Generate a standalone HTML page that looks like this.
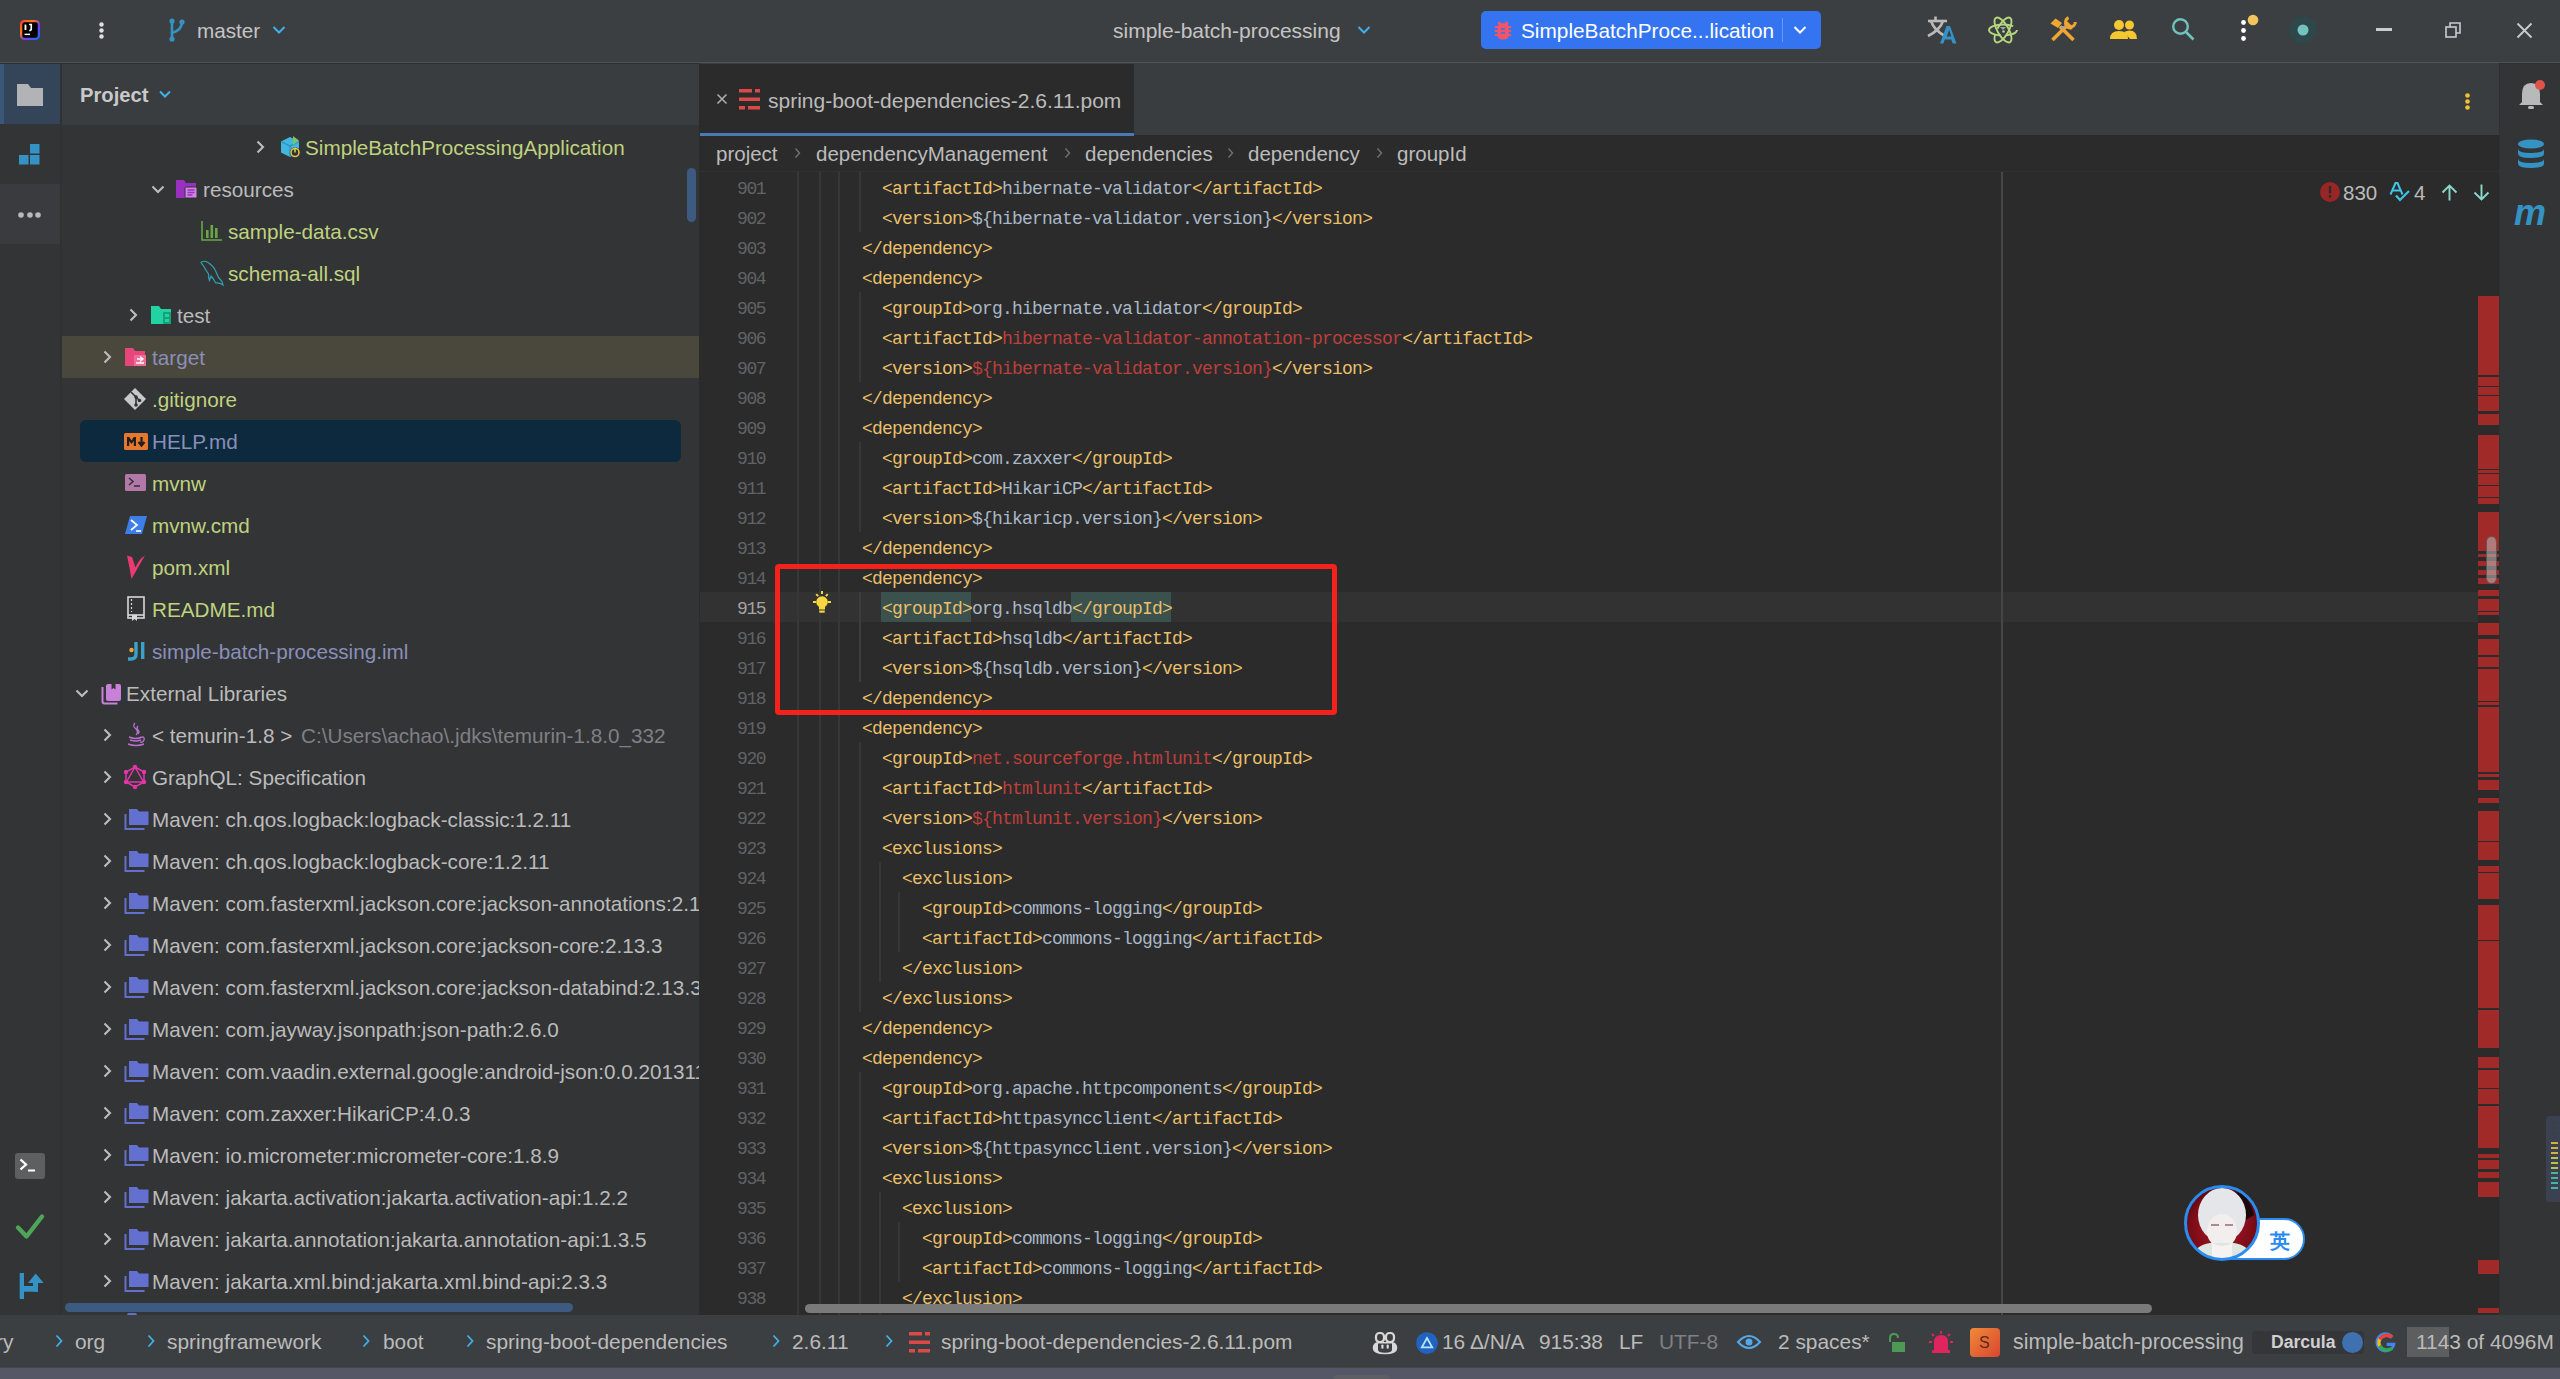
<!DOCTYPE html><html><head><meta charset="utf-8"><style>
*{margin:0;padding:0;box-sizing:border-box}
html,body{width:2560px;height:1379px;overflow:hidden;background:#2b2b2b}
body{position:relative;font-family:"Liberation Sans",sans-serif;color:#bbbbbb}
.a{position:absolute}
.t{position:absolute;white-space:pre;font-size:20.7px;line-height:42px;height:42px}
.c{position:absolute;left:802px;white-space:pre;font-family:"Liberation Mono",monospace;font-size:18px;letter-spacing:-0.8px;line-height:30px;height:30px;color:#a9b7c6}
.g{color:#e8bf6a}
.r{color:#bc3f3c}
.ln{position:absolute;left:664px;width:101px;text-align:right;font-family:"Liberation Mono",monospace;font-size:18px;letter-spacing:-1.5px;line-height:30px;color:#606366}
svg{position:absolute;overflow:visible}
</style></head><body>
<div class="a" style="left:0px;top:0px;width:2560px;height:62px;background:#3c3f41;"></div>
<div class="a" style="left:0px;top:62px;width:2560px;height:1px;background:#515151;"></div>
<div class="a" style="left:0px;top:63px;width:2560px;height:1px;background:#3a3d40;"></div>
<div class="a" style="left:0px;top:63px;width:700px;height:1px;background:#2e2f30;"></div>
<div class="a" style="left:0px;top:64px;width:60px;height:1251px;background:#333436;"></div>
<div class="a" style="left:60px;top:64px;width:2px;height:1251px;background:#303133;"></div>
<div class="a" style="left:0px;top:64px;width:60px;height:60px;background:#34455a;"></div>
<div class="a" style="left:0px;top:64px;width:4px;height:60px;background:#3a5679;"></div>
<div class="a" style="left:0px;top:184px;width:60px;height:60px;background:#393b3f;"></div>
<div class="a" style="left:62px;top:64px;width:637px;height:61px;background:#3a3d40;"></div>
<div class="a" style="left:62px;top:125px;width:637px;height:1190px;background:#333436;"></div>
<div class="a" style="left:699px;top:64px;width:1px;height:1251px;background:#2b2b2b;"></div>
<div class="a" style="left:700px;top:64px;width:1799px;height:71px;background:#3a3d40;"></div>
<div class="a" style="left:700px;top:64px;width:434px;height:71px;background:#2b2b2b;"></div>
<div class="a" style="left:700px;top:133px;width:434px;height:3px;background:#4a7ab5;"></div>
<div class="a" style="left:700px;top:136px;width:1799px;height:35px;background:#2b2b2b;"></div>
<div class="a" style="left:700px;top:171px;width:1799px;height:1px;background:#323232;"></div>
<div class="a" style="left:700px;top:172px;width:1799px;height:1143px;background:#2b2b2b;"></div>
<div class="a" style="left:2499px;top:63px;width:61px;height:1252px;background:#333436;"></div>
<div class="a" style="left:2499px;top:63px;width:61px;height:1px;background:#2f3031;"></div>
<div class="a" style="left:2499px;top:63px;width:1px;height:1252px;background:#2f3031;"></div>
<div class="a" style="left:0px;top:1315px;width:2560px;height:52px;background:#3c3f41;"></div>
<div class="a" style="left:0px;top:1367px;width:2560px;height:12px;background:#555766;"></div>
<div class="a" style="left:0px;top:1367px;width:2560px;height:1px;background:#45474d;"></div>
<div class="a" style="left:1333px;top:1375px;width:57px;height:6px;background:#5d5f65;border-radius:5px 5px 0 0"></div>
<svg style="left:20px;top:20px" width="20" height="20" viewBox="0 0 20 20"><defs><linearGradient id="ij" x1="0" y1="0" x2="1" y2="1"><stop offset="0" stop-color="#ff3d3d"/><stop offset=".35" stop-color="#ff7a1a"/><stop offset=".6" stop-color="#7a3bf0"/><stop offset="1" stop-color="#087cfa"/></linearGradient></defs><g transform="scale(.909)"><rect x="0" y="0" width="22" height="22" rx="5" fill="url(#ij)"/><rect x="2.5" y="2.5" width="17" height="17" rx="2" fill="#000"/><rect x="5" y="5" width="2" height="6" fill="#fff"/><path d="M10 5h2.4v4.5q0 2-2.2 2" stroke="#fff" stroke-width="1.8" fill="none"/><rect x="5" y="15" width="6" height="1.6" fill="#fff"/></g></svg>
<svg style="left:99px;top:22px" width="5" height="5" viewBox="0 0 5 5"><circle cx="2.5" cy="2.5" r="2.2" fill="#e0e0e0"/></svg>
<svg style="left:99px;top:28px" width="5" height="5" viewBox="0 0 5 5"><circle cx="2.5" cy="2.5" r="2.2" fill="#e0e0e0"/></svg>
<svg style="left:99px;top:34px" width="5" height="5" viewBox="0 0 5 5"><circle cx="2.5" cy="2.5" r="2.2" fill="#e0e0e0"/></svg>
<svg style="left:168px;top:18px" width="18" height="24" viewBox="0 0 18 24"><g stroke="#3592c4" stroke-width="2.6" fill="none" stroke-linecap="round"><path d="M4 3v18"/><path d="M14 4q0 8-10 11"/></g><circle cx="4" cy="3" r="2.6" fill="#3592c4"/><circle cx="14" cy="4" r="2.6" fill="#3592c4"/><circle cx="4" cy="21" r="2.6" fill="#3592c4"/></svg>
<div class="t" style="left:197px;top:10px;color:#c4c4c4;font-size:20.7px;line-height:42px;height:42px;">master</div>
<svg style="left:272px;top:25px" width="14" height="10" viewBox="0 0 14 10"><path d="M1.5 2l5.5 5.5 5.5-5.5" stroke="#3fb0e8" stroke-width="2" fill="none"/></svg>
<div class="t" style="left:1113px;top:10px;color:#c4c4c4;font-size:21px;line-height:42px;height:42px;">simple-batch-processing</div>
<svg style="left:1357px;top:25px" width="14" height="10" viewBox="0 0 14 10"><path d="M1.5 2l5.5 5.5 5.5-5.5" stroke="#3fb0e8" stroke-width="2" fill="none"/></svg>
<div class="a" style="left:1481px;top:11px;width:340px;height:38px;background:#3574f0;border-radius:5px"></div>
<svg style="left:1494px;top:20px" width="18" height="20" viewBox="0 0 18 20"><g fill="#f55468"><path d="M3.5 3.3l1.8-2.3 1.8 2.2h3.8l1.8-2.2 1.8 2.3-1 1.5q1.5 1 1.5 3v6.5q0 5.3-5.8 5.3t-5.8-5.3V7.8q0-2 1.5-3z"/><rect x="0.8" y="6" width="16.4" height="2"/><rect x="0.8" y="10" width="16.4" height="2"/><rect x="0.8" y="14" width="16.4" height="2"/></g><g fill="#3574f0"><rect x="7" y="8.2" width="4" height="1.6"/><rect x="7" y="12.2" width="4" height="1.6"/><rect x="2.5" y="8" width="0.8" height="2"/><rect x="14.7" y="8" width="0.8" height="2"/><rect x="2.5" y="12" width="0.8" height="2"/><rect x="14.7" y="12" width="0.8" height="2"/></g></svg>
<div class="t" style="left:1521px;top:10px;color:#ffffff;font-size:20.8px;line-height:42px;height:42px;">SimpleBatchProce...lication</div>
<div class="a" style="left:1782px;top:18px;width:1px;height:24px;background:#6a98f5;"></div>
<svg style="left:1793px;top:25px" width="14" height="10" viewBox="0 0 14 10"><path d="M1.5 2l5.5 5.5 5.5-5.5" stroke="#ffffff" stroke-width="2" fill="none"/></svg>
<svg style="left:1927px;top:16px" width="32" height="28" viewBox="0 0 32 28"><g stroke="#b9b9b9" stroke-width="2.6" fill="none"><path d="M1 5h19"/><path d="M8.5 0.5v4"/><path d="M4 5q3 9 14 15"/><path d="M16 5q-3 9-15 15"/></g><path d="M13 27.5L19.5 10h3.5l6.5 17.5h-3.8l-1.4-4h-6.5l-1.4 4zM19.8 20.5h4.6l-2.3-6.8z" fill="#3592c4"/></svg>
<svg style="left:1988px;top:16px" width="30" height="28" viewBox="0 0 30 28"><g stroke="#b4d67c" stroke-width="1.9" fill="none"><ellipse cx="15" cy="14" rx="14" ry="5.5" stroke-dasharray="13 5 40 50"/><ellipse cx="15" cy="14" rx="14" ry="5.5" transform="rotate(60 15 14)"/><ellipse cx="15" cy="14" rx="14" ry="5.5" transform="rotate(-60 15 14)" stroke-dasharray="40 6 50"/></g><path d="M12 11h6l-3 3z" fill="#9aa6b0"/><circle cx="15.5" cy="15.5" r="1.3" fill="#b4d67c"/></svg>
<svg style="left:2050px;top:17px" width="26" height="25" viewBox="0 0 26 25"><g stroke="#f0a732" stroke-width="3.6" fill="none"><path d="M2.5 23L16 9.5"/><path d="M23.5 23L10 9.5"/></g><path d="M0.5 6.5L5.5 1.5 12 6 8 11z" fill="#f0a732"/><path d="M15 3.5a6 6 0 0 0 7.5 8.5l-1-3.5-3-3z" fill="#f0a732"/><circle cx="20.5" cy="5" r="4.8" stroke="#f0a732" stroke-width="3" fill="none" stroke-dasharray="20 10"/><path d="M10 9h6l-3 3.5z" fill="#9aa6b0"/></svg>
<svg style="left:2110px;top:19px" width="27" height="21" viewBox="0 0 27 21"><g fill="#f5c830"><circle cx="9" cy="6" r="5"/><path d="M0 20q0-8 9-8t9 8z"/><circle cx="19.5" cy="6" r="4.5"/><path d="M14 13q3-1.5 5.5-1.5q7.5 0 7.5 8.5h-7z"/></g></svg>
<svg style="left:2171px;top:17px" width="25" height="25" viewBox="0 0 25 25"><circle cx="9.5" cy="9.5" r="7.3" stroke="#6ec4bc" stroke-width="2.4" fill="none"/><path d="M15 15l7.5 7.5" stroke="#6ec4bc" stroke-width="2.6"/></svg>
<svg style="left:2241px;top:19.5px" width="5" height="5" viewBox="0 0 5 5"><circle cx="2.5" cy="2.5" r="2.4" fill="#ffffff"/></svg>
<svg style="left:2241px;top:27.5px" width="5" height="5" viewBox="0 0 5 5"><circle cx="2.5" cy="2.5" r="2.4" fill="#ffffff"/></svg>
<svg style="left:2241px;top:35.5px" width="5" height="5" viewBox="0 0 5 5"><circle cx="2.5" cy="2.5" r="2.4" fill="#ffffff"/></svg>
<svg style="left:2247px;top:14px" width="12" height="12" viewBox="0 0 12 12"><circle cx="6" cy="6" r="5.3" fill="#f2c55c"/></svg>
<svg style="left:2289px;top:16px" width="28" height="28" viewBox="0 0 28 28"><circle cx="14" cy="14" r="14" fill="#2f474a"/><circle cx="14" cy="14" r="5.5" fill="#6fc6c0"/><path d="M11 11h6l-3 3z" fill="#9aa6b0" opacity=".7"/></svg>
<div class="a" style="left:2376px;top:28px;width:16px;height:3px;background:#c8ccd0;"></div>
<svg style="left:2444px;top:21px" width="20" height="18" viewBox="0 0 20 18"><rect x="2" y="6" width="10" height="10" stroke="#c8ccd0" stroke-width="1.6" fill="none"/><path d="M6 6V2h10v10h-4" stroke="#c8ccd0" stroke-width="1.6" fill="none"/></svg>
<svg style="left:2516px;top:22px" width="17" height="17" viewBox="0 0 17 17"><path d="M1.5 1.5l14 14M15.5 1.5l-14 14" stroke="#c8ccd0" stroke-width="1.8"/></svg>
<svg style="left:17px;top:84px" width="26" height="22" viewBox="0 0 26 22"><path d="M0 0h11l3 4h12v18H0z" fill="#b1b3b6"/></svg>
<svg style="left:19px;top:144px" width="22" height="22" viewBox="0 0 22 22"><g fill="#3592c4"><rect x="11" y="0" width="9.5" height="9.5"/><rect x="0" y="11" width="9.5" height="9.5"/><rect x="11" y="11" width="9.5" height="9.5"/></g></svg>
<svg style="left:18px;top:212px" width="6" height="6" viewBox="0 0 6 6"><circle cx="3" cy="3" r="2.8" fill="#b8b9bb"/></svg>
<svg style="left:27px;top:212px" width="6" height="6" viewBox="0 0 6 6"><circle cx="3" cy="3" r="2.8" fill="#b8b9bb"/></svg>
<svg style="left:35px;top:212px" width="6" height="6" viewBox="0 0 6 6"><circle cx="3" cy="3" r="2.8" fill="#b8b9bb"/></svg>
<div class="a" style="left:15px;top:1153px;width:30px;height:26px;background:#5e5f61;border-radius:3px"></div>
<svg style="left:18px;top:1158px" width="24" height="16" viewBox="0 0 24 16"><path d="M2.5 1.5l5.5 5-5.5 5" stroke="#ffffff" stroke-width="2.3" fill="none"/><path d="M10 12.5h7" stroke="#ffffff" stroke-width="2"/></svg>
<svg style="left:16px;top:1214px" width="28" height="26" viewBox="0 0 28 26"><path d="M2 13.5L10.5 22.5L26 2.5" stroke="#4ea55a" stroke-width="4.4" stroke-linecap="round" stroke-linejoin="round" fill="none"/></svg>
<svg style="left:18px;top:1272px" width="28" height="28" viewBox="0 0 28 28"><g fill="#3592c4"><rect x="1.7" y="1" width="4.3" height="26"/><rect x="6" y="14" width="14" height="5.7"/><rect x="15" y="10" width="5" height="9.7"/><path d="M10 11L17.7 1.6L25.7 11z"/></g></svg>
<div class="t" style="left:80px;top:74px;color:#c9c9c9;font-size:20.2px;line-height:42px;height:42px;font-weight:bold">Project</div>
<svg style="left:159px;top:90px" width="12" height="8" viewBox="0 0 12 8"><path d="M1 1.5l5 5 5-5" stroke="#3fb0e8" stroke-width="2" fill="none"/></svg>
<div class="a" style="left:62px;top:336px;width:637px;height:42px;background:#4a473d;"></div>
<div class="a" style="left:80px;top:420px;width:601px;height:42px;background:#0d293e;border-radius:6px"></div>
<div class="a" style="left:62px;top:125px;width:637px;height:1189px;overflow:hidden">
<svg style="left:193px;top:15px" width="10" height="14" viewBox="0 0 10 14"><path d="M2.5 1.5l5.5 5.5-5.5 5.5" stroke="#bdbdbd" stroke-width="2.1" fill="none"/></svg>
<svg style="left:217px;top:11px" width="22" height="22" viewBox="0 0 22 22"><path d="M11 1l9 4.5v11L11 21 2 16.5v-11z" fill="#40b6e0"/><path d="M2 5.5L11 10l9-4.5" stroke="#2b8fb8" stroke-width="1.2" fill="none"/><path d="M11 10v11" stroke="#2b8fb8" stroke-width="1.2"/><path d="M14 0v9l6-4.5z" fill="#7cc46a"/><circle cx="16" cy="16.5" r="5.2" fill="#313234"/><circle cx="16" cy="16.5" r="4" stroke="#d8c84a" stroke-width="1.6" fill="none"/><path d="M16 11.5v5" stroke="#d8c84a" stroke-width="1.6"/></svg>
<div class="t" style="left:243px;top:2px;color:#bfd27e;font-size:20.7px;line-height:42px;height:42px;">SimpleBatchProcessingApplication</div>
<svg style="left:89px;top:59px" width="14" height="10" viewBox="0 0 14 10"><path d="M1.5 2.5l5.5 5.5 5.5-5.5" stroke="#bdbdbd" stroke-width="2.1" fill="none"/></svg>
<svg style="left:114px;top:54px" width="22" height="20" viewBox="0 0 22 20"><path d="M0 1h8l2 3h10v15H0z" fill="#9a30bf"/><rect x="9" y="8" width="12" height="11" rx="1.5" fill="#cf86e6" stroke="#333436" stroke-width="1"/><path d="M11.5 11h7M11.5 13.5h7M11.5 16h5" stroke="#9a30bf" stroke-width="1.3"/></svg>
<div class="t" style="left:141px;top:44px;color:#bbbbbb;font-size:20.7px;line-height:42px;height:42px;">resources</div>
<svg style="left:139px;top:95px" width="22" height="22" viewBox="0 0 22 22"><path d="M1 1v19h20" stroke="#6aa646" stroke-width="1.6" fill="none"/><g fill="#6aa646"><rect x="5" y="10" width="2.6" height="8"/><rect x="9.5" y="5" width="2.6" height="13"/><rect x="14" y="8" width="2.6" height="10"/></g></svg>
<div class="t" style="left:166px;top:86px;color:#bfd27e;font-size:20.7px;line-height:42px;height:42px;">sample-data.csv</div>
<svg style="left:138px;top:135px" width="24" height="26" viewBox="0 0 24 26"><path d="M1 2.5Q4 0 8 2.5Q14 6 16.5 13Q18 18 22 21.5L23 25Q19.5 22.5 16 23L14.5 21Q13 18 11 16L9.5 20.5Q8.3 17.5 8.5 14Q5.5 9.5 3.5 6Q2 4 1 2.5z" stroke="#2ea2b2" stroke-width="1.2" fill="none"/></svg>
<div class="t" style="left:166px;top:128px;color:#bfd27e;font-size:20.7px;line-height:42px;height:42px;">schema-all.sql</div>
<svg style="left:66px;top:183px" width="10" height="14" viewBox="0 0 10 14"><path d="M2.5 1.5l5.5 5.5-5.5 5.5" stroke="#bdbdbd" stroke-width="2.1" fill="none"/></svg>
<svg style="left:89px;top:180px" width="22" height="20" viewBox="0 0 22 20"><path d="M0 1h8l2 3h10v15H0z" fill="#21d3a2"/><rect x="12" y="7" width="8" height="12" fill="#16a07c"/><rect x="14" y="9" width="4" height="3" fill="#21d3a2"/><rect x="14" y="14" width="4" height="3" fill="#21d3a2"/></svg>
<div class="t" style="left:115px;top:170px;color:#bbbbbb;font-size:20.7px;line-height:42px;height:42px;">test</div>
<svg style="left:40px;top:225px" width="10" height="14" viewBox="0 0 10 14"><path d="M2.5 1.5l5.5 5.5-5.5 5.5" stroke="#bdbdbd" stroke-width="2.1" fill="none"/></svg>
<svg style="left:63px;top:222px" width="22" height="20" viewBox="0 0 22 20"><path d="M0 1h8l2 3h10v15H0z" fill="#e8457a"/><rect x="9" y="8" width="12" height="11" fill="#f06c98"/><path d="M12 12h6M15 9.5l3 2.5-3 2.5M11 16h8" stroke="#ffffff" stroke-width="1.3" fill="none"/></svg>
<div class="t" style="left:90px;top:212px;color:#8a8fb8;font-size:20.7px;line-height:42px;height:42px;">target</div>
<svg style="left:62px;top:263px" width="22" height="22" viewBox="0 0 22 22"><path d="M11 0l11 11-11 11L0 11z" fill="#c8c8c8"/><path d="M7 4l5 5v8M12 9l3 3" stroke="#313234" stroke-width="1.6" fill="none"/><circle cx="12" cy="9" r="1.8" fill="#313234"/><circle cx="12" cy="17" r="1.8" fill="#313234"/><circle cx="15.5" cy="12.5" r="1.8" fill="#313234"/></svg>
<div class="t" style="left:90px;top:254px;color:#bfd27e;font-size:20.7px;line-height:42px;height:42px;">.gitignore</div>
<svg style="left:62px;top:308px" width="24" height="17" viewBox="0 0 24 17"><rect x="0" y="0" width="24" height="17" rx="1.5" fill="#e8772e"/><path d="M3 13V4h2.2l2.3 3.5L9.8 4H12v9h-2.2V8l-2.3 3-2.3-3v5z" fill="#1e1e1e"/><path d="M17.5 4v6.5M14.5 9l3 3.5 3-3.5" stroke="#1e1e1e" stroke-width="2.2" fill="none"/></svg>
<div class="t" style="left:90px;top:296px;color:#8a8fb8;font-size:20.7px;line-height:42px;height:42px;">HELP.md</div>
<svg style="left:63px;top:349px" width="21" height="17" viewBox="0 0 21 17"><rect x="0" y="0" width="21" height="17" rx="1.5" fill="#b278a8"/><path d="M4 4l4 3.5L4 11" stroke="#313234" stroke-width="1.6" fill="none"/><path d="M9 12h6" stroke="#313234" stroke-width="1.6"/></svg>
<div class="t" style="left:90px;top:338px;color:#bfd27e;font-size:20.7px;line-height:42px;height:42px;">mvnw</div>
<svg style="left:63px;top:391px" width="22" height="18" viewBox="0 0 22 18"><path d="M5 0h17l-5 18H0z" fill="#3e7ee8"/><path d="M6 4l6 5-6 5" stroke="#ffffff" stroke-width="1.7" fill="none"/><path d="M11 15h5" stroke="#ffffff" stroke-width="1.6"/></svg>
<div class="t" style="left:90px;top:380px;color:#bfd27e;font-size:20.7px;line-height:42px;height:42px;">mvnw.cmd</div>
<svg style="left:64px;top:429px" width="20" height="26" viewBox="0 0 20 26"><path d="M1 1.5L6 3Q8 9 9.5 13.5Q13 5 19 1.5Q14 10 5.5 25Q3.5 13 1 1.5z" fill="#ea3a72"/></svg>
<div class="t" style="left:90px;top:422px;color:#bfd27e;font-size:20.7px;line-height:42px;height:42px;">pom.xml</div>
<svg style="left:64px;top:471px" width="20" height="26" viewBox="0 0 20 26"><rect x="2" y="1" width="16" height="21" stroke="#d8d8d8" stroke-width="1.6" fill="none"/><path d="M2 19h16" stroke="#d8d8d8" stroke-width="1.6"/><path d="M5.5 3v13" stroke="#d8d8d8" stroke-width="1.2" stroke-dasharray="2 2"/><path d="M6 19v6l2.5-2 2.5 2v-6" fill="#d8d8d8"/></svg>
<div class="t" style="left:90px;top:464px;color:#bfd27e;font-size:20.7px;line-height:42px;height:42px;">README.md</div>
<svg style="left:65px;top:516px" width="20" height="20" viewBox="0 0 20 20"><path d="M9 1v12q0 5-5 5H1" stroke="#3aa3c8" stroke-width="3.4" fill="none"/><rect x="14" y="1" width="3.4" height="17" fill="#3aa3c8"/><circle cx="4.5" cy="9" r="2.2" fill="#f2a534"/></svg>
<div class="t" style="left:90px;top:506px;color:#8a8fb8;font-size:20.7px;line-height:42px;height:42px;">simple-batch-processing.iml</div>
<svg style="left:13px;top:563px" width="14" height="10" viewBox="0 0 14 10"><path d="M1.5 2.5l5.5 5.5 5.5-5.5" stroke="#bdbdbd" stroke-width="2.1" fill="none"/></svg>
<svg style="left:39px;top:558px" width="22" height="22" viewBox="0 0 22 22"><rect x="5" y="1" width="15" height="17" rx="2" fill="#c980d8"/><path d="M1.5 4v14.5q0 2 2 2h13" stroke="#c980d8" stroke-width="2" fill="none"/><path d="M14.5 1v5.5l-2-1.5-2 1.5V1" fill="#333436"/></svg>
<div class="t" style="left:64px;top:548px;color:#bbbbbb;font-size:20.7px;line-height:42px;height:42px;">External Libraries</div>
<svg style="left:40px;top:603px" width="10" height="14" viewBox="0 0 10 14"><path d="M2.5 1.5l5.5 5.5-5.5 5.5" stroke="#bdbdbd" stroke-width="2.1" fill="none"/></svg>
<svg style="left:64px;top:597px" width="20" height="26" viewBox="0 0 20 26"><path d="M9 1q-3 3 1 6q3 3 0 6M12 4q-2 2 0 4q2 2 0 4" stroke="#b86fd0" stroke-width="1.3" fill="none"/><path d="M3 15q7 3 13 0M4 18q6 2 11 0M2 22q8 3 16 0" stroke="#b86fd0" stroke-width="1.4" fill="none"/><path d="M16 15q3 0 2 3t-4 2" stroke="#b86fd0" stroke-width="1.3" fill="none"/></svg>
<div class="t" style="left:90px;top:590px;color:#bbbbbb;font-size:20.7px;line-height:42px;height:42px;">&lt; temurin-1.8 &gt;</div>
<div class="t" style="left:239px;top:590px;color:#7f8084;font-size:20.7px;line-height:42px;height:42px;">C:\Users\achao\.jdks\temurin-1.8.0_332</div>
<svg style="left:40px;top:645px" width="10" height="14" viewBox="0 0 10 14"><path d="M2.5 1.5l5.5 5.5-5.5 5.5" stroke="#bdbdbd" stroke-width="2.1" fill="none"/></svg>
<svg style="left:62px;top:640px" width="22" height="24" viewBox="0 0 22 24"><g stroke="#e535ab" stroke-width="1.5" fill="none"><path d="M11 2l9 5v10l-9 5-9-5V7z"/><path d="M11 2L2.5 17h17z"/></g><g fill="#e535ab"><circle cx="11" cy="2" r="2.2"/><circle cx="20" cy="7" r="2.2"/><circle cx="20" cy="17" r="2.2"/><circle cx="11" cy="22" r="2.2"/><circle cx="2" cy="17" r="2.2"/><circle cx="2" cy="7" r="2.2"/></g></svg>
<div class="t" style="left:90px;top:632px;color:#bbbbbb;font-size:20.7px;line-height:42px;height:42px;">GraphQL: Specification</div>
<svg style="left:40px;top:687px" width="10" height="14" viewBox="0 0 10 14"><path d="M2.5 1.5l5.5 5.5-5.5 5.5" stroke="#bdbdbd" stroke-width="2.1" fill="none"/></svg>
<svg style="left:62px;top:684px" width="25" height="21" viewBox="0 0 25 21"><path d="M5 0h8l2 2.5h9.5V16H5z" fill="#6370d0"/><path d="M1.5 5v15h19" stroke="#6370d0" stroke-width="2" fill="none"/></svg>
<div class="t" style="left:90px;top:674px;color:#bbbbbb;font-size:20.7px;line-height:42px;height:42px;">Maven: ch.qos.logback:logback-classic:1.2.11</div>
<svg style="left:40px;top:729px" width="10" height="14" viewBox="0 0 10 14"><path d="M2.5 1.5l5.5 5.5-5.5 5.5" stroke="#bdbdbd" stroke-width="2.1" fill="none"/></svg>
<svg style="left:62px;top:726px" width="25" height="21" viewBox="0 0 25 21"><path d="M5 0h8l2 2.5h9.5V16H5z" fill="#6370d0"/><path d="M1.5 5v15h19" stroke="#6370d0" stroke-width="2" fill="none"/></svg>
<div class="t" style="left:90px;top:716px;color:#bbbbbb;font-size:20.7px;line-height:42px;height:42px;">Maven: ch.qos.logback:logback-core:1.2.11</div>
<svg style="left:40px;top:771px" width="10" height="14" viewBox="0 0 10 14"><path d="M2.5 1.5l5.5 5.5-5.5 5.5" stroke="#bdbdbd" stroke-width="2.1" fill="none"/></svg>
<svg style="left:62px;top:768px" width="25" height="21" viewBox="0 0 25 21"><path d="M5 0h8l2 2.5h9.5V16H5z" fill="#6370d0"/><path d="M1.5 5v15h19" stroke="#6370d0" stroke-width="2" fill="none"/></svg>
<div class="t" style="left:90px;top:758px;color:#bbbbbb;font-size:20.7px;line-height:42px;height:42px;">Maven: com.fasterxml.jackson.core:jackson-annotations:2.13.3</div>
<svg style="left:40px;top:813px" width="10" height="14" viewBox="0 0 10 14"><path d="M2.5 1.5l5.5 5.5-5.5 5.5" stroke="#bdbdbd" stroke-width="2.1" fill="none"/></svg>
<svg style="left:62px;top:810px" width="25" height="21" viewBox="0 0 25 21"><path d="M5 0h8l2 2.5h9.5V16H5z" fill="#6370d0"/><path d="M1.5 5v15h19" stroke="#6370d0" stroke-width="2" fill="none"/></svg>
<div class="t" style="left:90px;top:800px;color:#bbbbbb;font-size:20.7px;line-height:42px;height:42px;">Maven: com.fasterxml.jackson.core:jackson-core:2.13.3</div>
<svg style="left:40px;top:855px" width="10" height="14" viewBox="0 0 10 14"><path d="M2.5 1.5l5.5 5.5-5.5 5.5" stroke="#bdbdbd" stroke-width="2.1" fill="none"/></svg>
<svg style="left:62px;top:852px" width="25" height="21" viewBox="0 0 25 21"><path d="M5 0h8l2 2.5h9.5V16H5z" fill="#6370d0"/><path d="M1.5 5v15h19" stroke="#6370d0" stroke-width="2" fill="none"/></svg>
<div class="t" style="left:90px;top:842px;color:#bbbbbb;font-size:20.7px;line-height:42px;height:42px;">Maven: com.fasterxml.jackson.core:jackson-databind:2.13.3</div>
<svg style="left:40px;top:897px" width="10" height="14" viewBox="0 0 10 14"><path d="M2.5 1.5l5.5 5.5-5.5 5.5" stroke="#bdbdbd" stroke-width="2.1" fill="none"/></svg>
<svg style="left:62px;top:894px" width="25" height="21" viewBox="0 0 25 21"><path d="M5 0h8l2 2.5h9.5V16H5z" fill="#6370d0"/><path d="M1.5 5v15h19" stroke="#6370d0" stroke-width="2" fill="none"/></svg>
<div class="t" style="left:90px;top:884px;color:#bbbbbb;font-size:20.7px;line-height:42px;height:42px;">Maven: com.jayway.jsonpath:json-path:2.6.0</div>
<svg style="left:40px;top:939px" width="10" height="14" viewBox="0 0 10 14"><path d="M2.5 1.5l5.5 5.5-5.5 5.5" stroke="#bdbdbd" stroke-width="2.1" fill="none"/></svg>
<svg style="left:62px;top:936px" width="25" height="21" viewBox="0 0 25 21"><path d="M5 0h8l2 2.5h9.5V16H5z" fill="#6370d0"/><path d="M1.5 5v15h19" stroke="#6370d0" stroke-width="2" fill="none"/></svg>
<div class="t" style="left:90px;top:926px;color:#bbbbbb;font-size:20.7px;line-height:42px;height:42px;">Maven: com.vaadin.external.google:android-json:0.0.20131108.vaadin1</div>
<svg style="left:40px;top:981px" width="10" height="14" viewBox="0 0 10 14"><path d="M2.5 1.5l5.5 5.5-5.5 5.5" stroke="#bdbdbd" stroke-width="2.1" fill="none"/></svg>
<svg style="left:62px;top:978px" width="25" height="21" viewBox="0 0 25 21"><path d="M5 0h8l2 2.5h9.5V16H5z" fill="#6370d0"/><path d="M1.5 5v15h19" stroke="#6370d0" stroke-width="2" fill="none"/></svg>
<div class="t" style="left:90px;top:968px;color:#bbbbbb;font-size:20.7px;line-height:42px;height:42px;">Maven: com.zaxxer:HikariCP:4.0.3</div>
<svg style="left:40px;top:1023px" width="10" height="14" viewBox="0 0 10 14"><path d="M2.5 1.5l5.5 5.5-5.5 5.5" stroke="#bdbdbd" stroke-width="2.1" fill="none"/></svg>
<svg style="left:62px;top:1020px" width="25" height="21" viewBox="0 0 25 21"><path d="M5 0h8l2 2.5h9.5V16H5z" fill="#6370d0"/><path d="M1.5 5v15h19" stroke="#6370d0" stroke-width="2" fill="none"/></svg>
<div class="t" style="left:90px;top:1010px;color:#bbbbbb;font-size:20.7px;line-height:42px;height:42px;">Maven: io.micrometer:micrometer-core:1.8.9</div>
<svg style="left:40px;top:1065px" width="10" height="14" viewBox="0 0 10 14"><path d="M2.5 1.5l5.5 5.5-5.5 5.5" stroke="#bdbdbd" stroke-width="2.1" fill="none"/></svg>
<svg style="left:62px;top:1062px" width="25" height="21" viewBox="0 0 25 21"><path d="M5 0h8l2 2.5h9.5V16H5z" fill="#6370d0"/><path d="M1.5 5v15h19" stroke="#6370d0" stroke-width="2" fill="none"/></svg>
<div class="t" style="left:90px;top:1052px;color:#bbbbbb;font-size:20.7px;line-height:42px;height:42px;">Maven: jakarta.activation:jakarta.activation-api:1.2.2</div>
<svg style="left:40px;top:1107px" width="10" height="14" viewBox="0 0 10 14"><path d="M2.5 1.5l5.5 5.5-5.5 5.5" stroke="#bdbdbd" stroke-width="2.1" fill="none"/></svg>
<svg style="left:62px;top:1104px" width="25" height="21" viewBox="0 0 25 21"><path d="M5 0h8l2 2.5h9.5V16H5z" fill="#6370d0"/><path d="M1.5 5v15h19" stroke="#6370d0" stroke-width="2" fill="none"/></svg>
<div class="t" style="left:90px;top:1094px;color:#bbbbbb;font-size:20.7px;line-height:42px;height:42px;">Maven: jakarta.annotation:jakarta.annotation-api:1.3.5</div>
<svg style="left:40px;top:1149px" width="10" height="14" viewBox="0 0 10 14"><path d="M2.5 1.5l5.5 5.5-5.5 5.5" stroke="#bdbdbd" stroke-width="2.1" fill="none"/></svg>
<svg style="left:62px;top:1146px" width="25" height="21" viewBox="0 0 25 21"><path d="M5 0h8l2 2.5h9.5V16H5z" fill="#6370d0"/><path d="M1.5 5v15h19" stroke="#6370d0" stroke-width="2" fill="none"/></svg>
<div class="t" style="left:90px;top:1136px;color:#bbbbbb;font-size:20.7px;line-height:42px;height:42px;">Maven: jakarta.xml.bind:jakarta.xml.bind-api:2.3.3</div>
</div>
<div class="a" style="left:687px;top:168px;width:9px;height:54px;background:#3d5a80;border-radius:5px"></div>
<div class="a" style="left:65px;top:1303px;width:508px;height:9px;background:#3d5a80;border-radius:5px"></div>
<div class="a" style="left:127px;top:1313px;width:10px;height:2px;background:#6370d0;border-radius:2px 2px 0 0"></div>
<svg style="left:716px;top:93px" width="12" height="12" viewBox="0 0 12 12"><path d="M1.5 1.5l9 9M10.5 1.5l-9 9" stroke="#a8adb3" stroke-width="1.6"/></svg>
<svg style="left:739px;top:89px" width="21" height="21" viewBox="0 0 21 21"><g fill="#db4a47"><rect x="0" y="0" width="13" height="3.5"/><rect x="16" y="0" width="5" height="3.5"/><rect x="0" y="8.5" width="21" height="3.5"/><rect x="0" y="17" width="6" height="3.5"/><rect x="9" y="17" width="12" height="3.5"/></g></svg>
<div class="t" style="left:768px;top:80px;color:#bbbbbb;font-size:21px;line-height:42px;height:42px;">spring-boot-dependencies-2.6.11.pom</div>
<svg style="left:2465px;top:92.5px" width="5" height="5" viewBox="0 0 5 5"><circle cx="2.5" cy="2.5" r="2.3" fill="#f2c230"/></svg>
<svg style="left:2465px;top:98.5px" width="5" height="5" viewBox="0 0 5 5"><circle cx="2.5" cy="2.5" r="2.3" fill="#f2c230"/></svg>
<svg style="left:2465px;top:104.5px" width="5" height="5" viewBox="0 0 5 5"><circle cx="2.5" cy="2.5" r="2.3" fill="#f2c230"/></svg>
<div class="t" style="left:716px;top:133px;color:#bbbbbb;font-size:20.5px;line-height:42px;height:42px;">project</div>
<div class="t" style="left:816px;top:133px;color:#bbbbbb;font-size:20.5px;line-height:42px;height:42px;">dependencyManagement</div>
<div class="t" style="left:1085px;top:133px;color:#bbbbbb;font-size:20.5px;line-height:42px;height:42px;">dependencies</div>
<div class="t" style="left:1248px;top:133px;color:#bbbbbb;font-size:20.5px;line-height:42px;height:42px;">dependency</div>
<div class="t" style="left:1397px;top:133px;color:#bbbbbb;font-size:20.5px;line-height:42px;height:42px;">groupId</div>
<svg style="left:794px;top:147px" width="7" height="12" viewBox="0 0 7 12"><path d="M1.5 1.5l4 4.5-4 4.5" stroke="#6f7275" stroke-width="1.4" fill="none"/></svg>
<svg style="left:1064px;top:147px" width="7" height="12" viewBox="0 0 7 12"><path d="M1.5 1.5l4 4.5-4 4.5" stroke="#6f7275" stroke-width="1.4" fill="none"/></svg>
<svg style="left:1227px;top:147px" width="7" height="12" viewBox="0 0 7 12"><path d="M1.5 1.5l4 4.5-4 4.5" stroke="#6f7275" stroke-width="1.4" fill="none"/></svg>
<svg style="left:1376px;top:147px" width="7" height="12" viewBox="0 0 7 12"><path d="M1.5 1.5l4 4.5-4 4.5" stroke="#6f7275" stroke-width="1.4" fill="none"/></svg>
<div class="a" style="left:700px;top:592px;width:1778px;height:30px;background:#323232;"></div>
<div class="a" style="left:2001px;top:172px;width:2px;height:1143px;background:#464646;"></div>
<div class="a" style="left:797px;top:172px;width:2px;height:1143px;background:#373737;"></div>
<div class="a" style="left:819px;top:172px;width:2px;height:1143px;background:#373737;"></div>
<div class="a" style="left:838px;top:172px;width:2px;height:1143px;background:#373737;"></div>
<div class="a" style="left:859px;top:172px;width:2px;height:60px;background:#373737;"></div>
<div class="a" style="left:859px;top:292px;width:2px;height:90px;background:#373737;"></div>
<div class="a" style="left:859px;top:442px;width:2px;height:90px;background:#373737;"></div>
<div class="a" style="left:859px;top:592px;width:2px;height:90px;background:#3d3d3d;"></div>
<div class="a" style="left:859px;top:742px;width:2px;height:270px;background:#373737;"></div>
<div class="a" style="left:859px;top:1072px;width:2px;height:243px;background:#373737;"></div>
<div class="a" style="left:879px;top:862px;width:2px;height:120px;background:#373737;"></div>
<div class="a" style="left:879px;top:1192px;width:2px;height:123px;background:#373737;"></div>
<div class="a" style="left:898px;top:892px;width:2px;height:60px;background:#373737;"></div>
<div class="a" style="left:898px;top:1222px;width:2px;height:60px;background:#373737;"></div>
<div class="a" style="left:881px;top:592px;width:90px;height:30px;background:#3b514d;"></div>
<div class="a" style="left:1071px;top:592px;width:100px;height:30px;background:#3b514d;"></div>
<div class="a" style="left:0;top:172px;width:2478px;height:1142px;overflow:hidden">
<div class="ln" style="top:2px;color:#606366">901</div>
<div class="c" style="top:2px">        <span class="g">&lt;artifactId&gt;</span>hibernate-validator<span class="g">&lt;/artifactId&gt;</span></div>
<div class="ln" style="top:32px;color:#606366">902</div>
<div class="c" style="top:32px">        <span class="g">&lt;version&gt;</span>${hibernate-validator.version}<span class="g">&lt;/version&gt;</span></div>
<div class="ln" style="top:62px;color:#606366">903</div>
<div class="c" style="top:62px">      <span class="g">&lt;/dependency&gt;</span></div>
<div class="ln" style="top:92px;color:#606366">904</div>
<div class="c" style="top:92px">      <span class="g">&lt;dependency&gt;</span></div>
<div class="ln" style="top:122px;color:#606366">905</div>
<div class="c" style="top:122px">        <span class="g">&lt;groupId&gt;</span>org.hibernate.validator<span class="g">&lt;/groupId&gt;</span></div>
<div class="ln" style="top:152px;color:#606366">906</div>
<div class="c" style="top:152px">        <span class="g">&lt;artifactId&gt;</span><span class="r">hibernate-validator-annotation-processor</span><span class="g">&lt;/artifactId&gt;</span></div>
<div class="ln" style="top:182px;color:#606366">907</div>
<div class="c" style="top:182px">        <span class="g">&lt;version&gt;</span><span class="r">${hibernate-validator.version}</span><span class="g">&lt;/version&gt;</span></div>
<div class="ln" style="top:212px;color:#606366">908</div>
<div class="c" style="top:212px">      <span class="g">&lt;/dependency&gt;</span></div>
<div class="ln" style="top:242px;color:#606366">909</div>
<div class="c" style="top:242px">      <span class="g">&lt;dependency&gt;</span></div>
<div class="ln" style="top:272px;color:#606366">910</div>
<div class="c" style="top:272px">        <span class="g">&lt;groupId&gt;</span>com.zaxxer<span class="g">&lt;/groupId&gt;</span></div>
<div class="ln" style="top:302px;color:#606366">911</div>
<div class="c" style="top:302px">        <span class="g">&lt;artifactId&gt;</span>HikariCP<span class="g">&lt;/artifactId&gt;</span></div>
<div class="ln" style="top:332px;color:#606366">912</div>
<div class="c" style="top:332px">        <span class="g">&lt;version&gt;</span>${hikaricp.version}<span class="g">&lt;/version&gt;</span></div>
<div class="ln" style="top:362px;color:#606366">913</div>
<div class="c" style="top:362px">      <span class="g">&lt;/dependency&gt;</span></div>
<div class="ln" style="top:392px;color:#606366">914</div>
<div class="c" style="top:392px">      <span class="g">&lt;dependency&gt;</span></div>
<div class="ln" style="top:422px;color:#a4a3a3">915</div>
<div class="c" style="top:422px">        <span class="g">&lt;groupId&gt;</span>org.hsqldb<span class="g">&lt;/groupId&gt;</span></div>
<div class="ln" style="top:452px;color:#606366">916</div>
<div class="c" style="top:452px">        <span class="g">&lt;artifactId&gt;</span>hsqldb<span class="g">&lt;/artifactId&gt;</span></div>
<div class="ln" style="top:482px;color:#606366">917</div>
<div class="c" style="top:482px">        <span class="g">&lt;version&gt;</span>${hsqldb.version}<span class="g">&lt;/version&gt;</span></div>
<div class="ln" style="top:512px;color:#606366">918</div>
<div class="c" style="top:512px">      <span class="g">&lt;/dependency&gt;</span></div>
<div class="ln" style="top:542px;color:#606366">919</div>
<div class="c" style="top:542px">      <span class="g">&lt;dependency&gt;</span></div>
<div class="ln" style="top:572px;color:#606366">920</div>
<div class="c" style="top:572px">        <span class="g">&lt;groupId&gt;</span><span class="r">net.sourceforge.htmlunit</span><span class="g">&lt;/groupId&gt;</span></div>
<div class="ln" style="top:602px;color:#606366">921</div>
<div class="c" style="top:602px">        <span class="g">&lt;artifactId&gt;</span><span class="r">htmlunit</span><span class="g">&lt;/artifactId&gt;</span></div>
<div class="ln" style="top:632px;color:#606366">922</div>
<div class="c" style="top:632px">        <span class="g">&lt;version&gt;</span><span class="r">${htmlunit.version}</span><span class="g">&lt;/version&gt;</span></div>
<div class="ln" style="top:662px;color:#606366">923</div>
<div class="c" style="top:662px">        <span class="g">&lt;exclusions&gt;</span></div>
<div class="ln" style="top:692px;color:#606366">924</div>
<div class="c" style="top:692px">          <span class="g">&lt;exclusion&gt;</span></div>
<div class="ln" style="top:722px;color:#606366">925</div>
<div class="c" style="top:722px">            <span class="g">&lt;groupId&gt;</span>commons-logging<span class="g">&lt;/groupId&gt;</span></div>
<div class="ln" style="top:752px;color:#606366">926</div>
<div class="c" style="top:752px">            <span class="g">&lt;artifactId&gt;</span>commons-logging<span class="g">&lt;/artifactId&gt;</span></div>
<div class="ln" style="top:782px;color:#606366">927</div>
<div class="c" style="top:782px">          <span class="g">&lt;/exclusion&gt;</span></div>
<div class="ln" style="top:812px;color:#606366">928</div>
<div class="c" style="top:812px">        <span class="g">&lt;/exclusions&gt;</span></div>
<div class="ln" style="top:842px;color:#606366">929</div>
<div class="c" style="top:842px">      <span class="g">&lt;/dependency&gt;</span></div>
<div class="ln" style="top:872px;color:#606366">930</div>
<div class="c" style="top:872px">      <span class="g">&lt;dependency&gt;</span></div>
<div class="ln" style="top:902px;color:#606366">931</div>
<div class="c" style="top:902px">        <span class="g">&lt;groupId&gt;</span>org.apache.httpcomponents<span class="g">&lt;/groupId&gt;</span></div>
<div class="ln" style="top:932px;color:#606366">932</div>
<div class="c" style="top:932px">        <span class="g">&lt;artifactId&gt;</span>httpasyncclient<span class="g">&lt;/artifactId&gt;</span></div>
<div class="ln" style="top:962px;color:#606366">933</div>
<div class="c" style="top:962px">        <span class="g">&lt;version&gt;</span>${httpasyncclient.version}<span class="g">&lt;/version&gt;</span></div>
<div class="ln" style="top:992px;color:#606366">934</div>
<div class="c" style="top:992px">        <span class="g">&lt;exclusions&gt;</span></div>
<div class="ln" style="top:1022px;color:#606366">935</div>
<div class="c" style="top:1022px">          <span class="g">&lt;exclusion&gt;</span></div>
<div class="ln" style="top:1052px;color:#606366">936</div>
<div class="c" style="top:1052px">            <span class="g">&lt;groupId&gt;</span>commons-logging<span class="g">&lt;/groupId&gt;</span></div>
<div class="ln" style="top:1082px;color:#606366">937</div>
<div class="c" style="top:1082px">            <span class="g">&lt;artifactId&gt;</span>commons-logging<span class="g">&lt;/artifactId&gt;</span></div>
<div class="ln" style="top:1112px;color:#606366">938</div>
<div class="c" style="top:1112px">          <span class="g">&lt;/exclusion&gt;</span></div>
</div>
<svg style="left:810px;top:590px" width="24" height="26" viewBox="0 0 24 26"><g fill="#f5d73f"><circle cx="12" cy="12" r="5.8"/><rect x="9" y="15" width="6" height="4.5"/><rect x="9.3" y="20.5" width="5.4" height="2.2"/><rect x="11" y="1" width="2" height="3"/><rect x="3" y="11" width="3" height="2"/><rect x="18" y="11" width="3" height="2"/><path d="M5.5 4.8l1.4-1.4 2 2-1.4 1.4zM18.5 4.8l-1.4-1.4-2 2 1.4 1.4z"/></g></svg>
<div class="a" style="left:775px;top:564px;width:562px;height:151px;background:transparent;border:5px solid #f5221b;border-radius:4px"></div>
<div class="a" style="left:805px;top:1304px;width:1347px;height:9px;background:#7a7a7a;border-radius:5px"></div>
<div class="a" style="left:2478px;top:296px;width:21px;height:79px;background:#a02a28;"></div>
<div class="a" style="left:2478px;top:377px;width:21px;height:9px;background:#a02a28;"></div>
<div class="a" style="left:2478px;top:387px;width:21px;height:8px;background:#a02a28;"></div>
<div class="a" style="left:2478px;top:396px;width:21px;height:15px;background:#a02a28;"></div>
<div class="a" style="left:2478px;top:414px;width:21px;height:11px;background:#a02a28;"></div>
<div class="a" style="left:2478px;top:435px;width:21px;height:34px;background:#a02a28;"></div>
<div class="a" style="left:2478px;top:470px;width:21px;height:3px;background:#a02a28;"></div>
<div class="a" style="left:2478px;top:474px;width:21px;height:11px;background:#a02a28;"></div>
<div class="a" style="left:2478px;top:486px;width:21px;height:11px;background:#a02a28;"></div>
<div class="a" style="left:2478px;top:498px;width:21px;height:6px;background:#a02a28;"></div>
<div class="a" style="left:2478px;top:512px;width:21px;height:39px;background:#a02a28;"></div>
<div class="a" style="left:2478px;top:554px;width:21px;height:3px;background:#a02a28;"></div>
<div class="a" style="left:2478px;top:561px;width:21px;height:5px;background:#a02a28;"></div>
<div class="a" style="left:2478px;top:570px;width:21px;height:5px;background:#a02a28;"></div>
<div class="a" style="left:2478px;top:578px;width:21px;height:6px;background:#a02a28;"></div>
<div class="a" style="left:2478px;top:590px;width:21px;height:6px;background:#a02a28;"></div>
<div class="a" style="left:2478px;top:599px;width:21px;height:12px;background:#a02a28;"></div>
<div class="a" style="left:2478px;top:612px;width:21px;height:3px;background:#a02a28;"></div>
<div class="a" style="left:2478px;top:623px;width:21px;height:12px;background:#a02a28;"></div>
<div class="a" style="left:2478px;top:639px;width:21px;height:16px;background:#a02a28;"></div>
<div class="a" style="left:2478px;top:657px;width:21px;height:10px;background:#a02a28;"></div>
<div class="a" style="left:2478px;top:669px;width:21px;height:32px;background:#a02a28;"></div>
<div class="a" style="left:2478px;top:702px;width:21px;height:3px;background:#a02a28;"></div>
<div class="a" style="left:2478px;top:707px;width:21px;height:65px;background:#a02a28;"></div>
<div class="a" style="left:2478px;top:774px;width:21px;height:3px;background:#a02a28;"></div>
<div class="a" style="left:2478px;top:780px;width:21px;height:10px;background:#a02a28;"></div>
<div class="a" style="left:2478px;top:798px;width:21px;height:5px;background:#a02a28;"></div>
<div class="a" style="left:2478px;top:811px;width:21px;height:30px;background:#a02a28;"></div>
<div class="a" style="left:2478px;top:842px;width:21px;height:18px;background:#a02a28;"></div>
<div class="a" style="left:2478px;top:866px;width:21px;height:6px;background:#a02a28;"></div>
<div class="a" style="left:2478px;top:873px;width:21px;height:26px;background:#a02a28;"></div>
<div class="a" style="left:2478px;top:905px;width:21px;height:35px;background:#a02a28;"></div>
<div class="a" style="left:2478px;top:941px;width:21px;height:67px;background:#a02a28;"></div>
<div class="a" style="left:2478px;top:1010px;width:21px;height:38px;background:#a02a28;"></div>
<div class="a" style="left:2478px;top:1057px;width:21px;height:11px;background:#a02a28;"></div>
<div class="a" style="left:2478px;top:1070px;width:21px;height:18px;background:#a02a28;"></div>
<div class="a" style="left:2478px;top:1089px;width:21px;height:15px;background:#a02a28;"></div>
<div class="a" style="left:2478px;top:1106px;width:21px;height:42px;background:#a02a28;"></div>
<div class="a" style="left:2478px;top:1154px;width:21px;height:4px;background:#a02a28;"></div>
<div class="a" style="left:2478px;top:1160px;width:21px;height:9px;background:#a02a28;"></div>
<div class="a" style="left:2478px;top:1172px;width:21px;height:6px;background:#a02a28;"></div>
<div class="a" style="left:2478px;top:1182px;width:21px;height:15px;background:#a02a28;"></div>
<div class="a" style="left:2478px;top:1260px;width:21px;height:14px;background:#a02a28;"></div>
<div class="a" style="left:2478px;top:1308px;width:21px;height:5px;background:#a02a28;"></div>
<div class="a" style="left:2486px;top:536px;width:11px;height:48px;background:rgba(190,190,190,.55);border-radius:6px;border:1.5px solid rgba(70,70,70,.7)"></div>
<div class="a" style="left:2546px;top:1116px;width:14px;height:86px;background:#3b4150;border-radius:4px 0 0 4px"></div>
<div class="a" style="left:2551px;top:1122px;width:7px;height:2px;background:#3a3f4a;"></div>
<div class="a" style="left:2551px;top:1127px;width:7px;height:2px;background:#3a3f4a;"></div>
<div class="a" style="left:2551px;top:1132px;width:7px;height:2px;background:#3a3f4a;"></div>
<div class="a" style="left:2551px;top:1137px;width:7px;height:2px;background:#3a3f4a;"></div>
<div class="a" style="left:2551px;top:1142px;width:7px;height:2px;background:#d4b13c;"></div>
<div class="a" style="left:2551px;top:1147px;width:7px;height:2px;background:#d4b13c;"></div>
<div class="a" style="left:2551px;top:1152px;width:7px;height:2px;background:#d4b13c;"></div>
<div class="a" style="left:2551px;top:1157px;width:7px;height:2px;background:#b9c24a;"></div>
<div class="a" style="left:2551px;top:1162px;width:7px;height:2px;background:#b9c24a;"></div>
<div class="a" style="left:2551px;top:1167px;width:7px;height:2px;background:#b9c24a;"></div>
<div class="a" style="left:2551px;top:1172px;width:7px;height:2px;background:#48b3a0;"></div>
<div class="a" style="left:2551px;top:1177px;width:7px;height:2px;background:#48b3a0;"></div>
<div class="a" style="left:2551px;top:1182px;width:7px;height:2px;background:#48b3a0;"></div>
<div class="a" style="left:2551px;top:1187px;width:7px;height:2px;background:#48b3a0;"></div>
<svg style="left:2320px;top:182px" width="20" height="20" viewBox="0 0 20 20"><circle cx="10" cy="10" r="10" fill="#992626"/><rect x="8.8" y="4" width="2.4" height="7.5" fill="#2b2b2b"/><rect x="8.8" y="13" width="2.4" height="2.6" fill="#2b2b2b"/></svg>
<div class="t" style="left:2343px;top:172px;color:#bbbbbb;font-size:20.5px;line-height:42px;height:42px;">830</div>
<svg style="left:2389px;top:182px" width="24" height="22" viewBox="0 0 24 22"><path d="M1.5 12.5L6.5 1h2L13.5 12.5" stroke="#3fc6e6" stroke-width="2" fill="none"/><path d="M3.5 8.5h8" stroke="#3fc6e6" stroke-width="2"/><path d="M7 13.5l4 4.5L20 9" stroke="#3fc6e6" stroke-width="2.2" fill="none"/></svg>
<div class="t" style="left:2414px;top:172px;color:#bbbbbb;font-size:20.5px;line-height:42px;height:42px;">4</div>
<svg style="left:2441px;top:184px" width="17" height="17" viewBox="0 0 17 17"><path d="M8.5 16.5V1.5M1.5 8.5L8.5 1.5l7 7" stroke="#8ad8cc" stroke-width="1.9" fill="none"/></svg>
<svg style="left:2473px;top:184px" width="17" height="17" viewBox="0 0 17 17"><path d="M8.5 0.5v15M1.5 8.5l7 7 7-7" stroke="#8ad8cc" stroke-width="1.9" fill="none"/></svg>
<svg style="left:2517px;top:80px" width="30" height="31" viewBox="0 0 30 31"><path d="M14 3q-9 0-9 11v8l-3 3h24l-3-3v-8q0-11-9-11z" fill="#b8b9bb"/><rect x="11" y="26" width="6" height="3" rx="1.5" fill="#b8b9bb"/><circle cx="23" cy="5" r="5" fill="#e0524a"/></svg>
<svg style="left:2517px;top:139px" width="28" height="30" viewBox="0 0 28 30"><g fill="#3592c4"><ellipse cx="14" cy="5" rx="13" ry="4.5"/><path d="M1 9.5q0 4.5 13 4.5t13-4.5v5q0 4.5-13 4.5t-13-4.5z"/><path d="M1 19.5q0 4.5 13 4.5t13-4.5v5q0 4.5-13 4.5t-13-4.5z"/></g></svg>
<div class="a" style="left:2514px;top:193px;font-family:Liberation Sans;font-weight:bold;font-style:italic;font-size:36px;line-height:40px;color:#3592c4;letter-spacing:-1px">m</div>
<div class="a" style="left:2222px;top:1218px;width:83px;height:42px;background:#ffffff;border:2.5px solid #2a8cf0;border-radius:0 21px 21px 0"></div>
<svg style="left:2184px;top:1185px" width="76" height="76" viewBox="0 0 76 76"><defs><clipPath id="avc"><circle cx="38" cy="38" r="36"/></clipPath><radialGradient id="avbg" cx=".5" cy=".55" r=".6"><stop offset="0" stop-color="#b01828"/><stop offset=".7" stop-color="#7a0c16"/><stop offset="1" stop-color="#3a0408"/></radialGradient></defs><g clip-path="url(#avc)"><rect width="76" height="76" fill="url(#avbg)"/><path d="M52 4q14 8 18 26l-10 6z" fill="#1a0a0c"/><ellipse cx="38" cy="30" rx="24" ry="27" fill="#e4e6ea"/><ellipse cx="38" cy="46" rx="15" ry="17" fill="#f2eeee"/><path d="M6 76q4-16 20-18h24q16 2 20 18z" fill="#dfe6e2"/><path d="M28 58q10 6 20 0v18H28z" fill="#f6f2f2"/><path d="M27 40h8M41 40h8" stroke="#9a6a6a" stroke-width="1.5"/></g><circle cx="38" cy="38" r="36.5" stroke="#2a8cf0" stroke-width="3" fill="none"/></svg>
<div class="t" style="left:2270px;top:1220px;color:#2a8cf0;font-size:20px;line-height:42px;height:42px;font-weight:bold">英</div>
<div class="t" style="left:-4px;top:1321px;color:#bbbbbb;font-size:20.9px;line-height:42px;height:42px;">ry</div>
<div class="t" style="left:75px;top:1321px;color:#bbbbbb;font-size:20.9px;line-height:42px;height:42px;">org</div>
<div class="t" style="left:167px;top:1321px;color:#bbbbbb;font-size:20.9px;line-height:42px;height:42px;">springframework</div>
<div class="t" style="left:383px;top:1321px;color:#bbbbbb;font-size:20.9px;line-height:42px;height:42px;">boot</div>
<div class="t" style="left:486px;top:1321px;color:#bbbbbb;font-size:20.9px;line-height:42px;height:42px;">spring-boot-dependencies</div>
<div class="t" style="left:792px;top:1321px;color:#bbbbbb;font-size:20.9px;line-height:42px;height:42px;">2.6.11</div>
<div class="t" style="left:941px;top:1321px;color:#bbbbbb;font-size:20.9px;line-height:42px;height:42px;">spring-boot-dependencies-2.6.11.pom</div>
<svg style="left:55px;top:1334px" width="9" height="14" viewBox="0 0 9 14"><path d="M1.5 1.5l5 5.5-5 5.5" stroke="#3fb0e8" stroke-width="1.8" fill="none"/></svg>
<svg style="left:147px;top:1334px" width="9" height="14" viewBox="0 0 9 14"><path d="M1.5 1.5l5 5.5-5 5.5" stroke="#3fb0e8" stroke-width="1.8" fill="none"/></svg>
<svg style="left:362px;top:1334px" width="9" height="14" viewBox="0 0 9 14"><path d="M1.5 1.5l5 5.5-5 5.5" stroke="#3fb0e8" stroke-width="1.8" fill="none"/></svg>
<svg style="left:466px;top:1334px" width="9" height="14" viewBox="0 0 9 14"><path d="M1.5 1.5l5 5.5-5 5.5" stroke="#3fb0e8" stroke-width="1.8" fill="none"/></svg>
<svg style="left:772px;top:1334px" width="9" height="14" viewBox="0 0 9 14"><path d="M1.5 1.5l5 5.5-5 5.5" stroke="#3fb0e8" stroke-width="1.8" fill="none"/></svg>
<svg style="left:885px;top:1334px" width="9" height="14" viewBox="0 0 9 14"><path d="M1.5 1.5l5 5.5-5 5.5" stroke="#3fb0e8" stroke-width="1.8" fill="none"/></svg>
<svg style="left:909px;top:1332px" width="21" height="21" viewBox="0 0 21 21"><g fill="#db4a47"><rect x="0" y="0" width="13" height="3.5"/><rect x="16" y="0" width="5" height="3.5"/><rect x="0" y="8.5" width="21" height="3.5"/><rect x="0" y="17" width="6" height="3.5"/><rect x="9" y="17" width="12" height="3.5"/></g></svg>
<svg style="left:1372px;top:1331px" width="26" height="24" viewBox="0 0 26 24"><g stroke="#d8d8d8" stroke-width="2.2" fill="none"><rect x="4" y="2" width="8" height="9" rx="3.5"/><rect x="14" y="2" width="8" height="9" rx="3.5"/></g><path d="M0.8 17.5q0-6.5 5.5-6.5h13.4q5.5 0 5.5 6.5q0 5.8-12.2 5.8T.8 17.5z" fill="#d8d8d8"/><path d="M6 12.5h14v6q0 3.2-7 3.2t-7-3.2z" fill="#3c3f41"/><rect x="9.3" y="13.5" width="2.2" height="4.3" rx="1" fill="#d8d8d8"/><rect x="14.6" y="13.5" width="2.2" height="4.3" rx="1" fill="#d8d8d8"/></svg>
<svg style="left:1416px;top:1332px" width="22" height="22" viewBox="0 0 22 22"><circle cx="11" cy="11" r="10.8" fill="#2262c0"/><path d="M11 6l5.2 9.3H5.8z" stroke="#b3e5fc" stroke-width="1.8" fill="none"/></svg>
<div class="t" style="left:1442px;top:1321px;color:#bbbbbb;font-size:20.9px;line-height:42px;height:42px;">16 Δ/N/A</div>
<div class="t" style="left:1539px;top:1321px;color:#bbbbbb;font-size:20.9px;line-height:42px;height:42px;">915:38</div>
<div class="t" style="left:1619px;top:1321px;color:#bbbbbb;font-size:20.9px;line-height:42px;height:42px;">LF</div>
<div class="t" style="left:1659px;top:1321px;color:#7f8084;font-size:20.9px;line-height:42px;height:42px;">UTF-8</div>
<svg style="left:1737px;top:1334px" width="24" height="16" viewBox="0 0 24 16"><path d="M1 8q11-12 22 0q-11 12-22 0z" stroke="#55a8e8" stroke-width="2" fill="none"/><circle cx="12" cy="8" r="3.5" fill="#55a8e8"/></svg>
<div class="t" style="left:1778px;top:1321px;color:#bbbbbb;font-size:20.9px;line-height:42px;height:42px;">2 spaces*</div>
<svg style="left:1886px;top:1333px" width="20" height="20" viewBox="0 0 20 20"><path d="M4 9V5q0-4 4-4t4 4" stroke="#4e9a55" stroke-width="2" fill="none"/><rect x="6" y="9" width="13" height="10" fill="#4e9a55"/></svg>
<svg style="left:1929px;top:1331px" width="24" height="23" viewBox="0 0 24 23"><path d="M5 19v-8q0-7 7-7t7 7v8z" fill="#e0245e"/><rect x="3" y="19" width="18" height="3" fill="#e0245e"/><path d="M12 0v3M3 3l2 2M21 3l-2 2M0 11h3M21 11h3" stroke="#e0245e" stroke-width="1.8"/></svg>
<div class="a" style="left:1970px;top:1328px;width:30px;height:29px;background:#e5683a;border-radius:4px;background:linear-gradient(135deg,#f08a3a,#d9452f)"></div>
<div class="t" style="left:1979px;top:1322px;color:#5a2a1a;font-size:16px;line-height:42px;height:42px;">S</div>
<div class="t" style="left:2013px;top:1321px;color:#bbbbbb;font-size:21.3px;line-height:42px;height:42px;">simple-batch-processing</div>
<div class="a" style="left:2252px;top:1331px;width:112px;height:23px;background:#34363a;border-radius:4px"></div>
<div class="t" style="left:2271px;top:1321px;color:#d0d0d0;font-size:17.6px;line-height:42px;height:42px;font-weight:bold">Darcula</div>
<svg style="left:2342px;top:1332px" width="21" height="21" viewBox="0 0 21 21"><circle cx="10.5" cy="10.5" r="10.5" fill="#3f70b0"/></svg>
<svg style="left:2377px;top:1333px" width="19" height="19" viewBox="0 0 19 19"><path d="M18.5 9.7H9.7v3.4h5q-.8 3.8-5 3.8a6.4 6.4 0 1 1 4.2-11.3l2.5-2.5A10 10 0 1 0 18.5 9.7z" fill="#4285f4"/><path d="M1.2 5.3l2.9 2.2A6.4 6.4 0 0 1 13.9 5.6l2.5-2.5A10 10 0 0 0 1.2 5.3z" fill="#ea4335"/><path d="M4.1 11.5L1.2 13.7A10 10 0 0 0 16.2 16.4l-2.8-2.2a6.4 6.4 0 0 1-9.3-2.7z" fill="#34a853"/><path d="M3.3 9.5q0-1 .8-2L1.2 5.3a10 10 0 0 0 0 8.4l2.9-2.2q-.8-1-.8-2z" fill="#fbbc05"/></svg>
<div class="a" style="left:2407px;top:1327px;width:42px;height:30px;background:#5c5e60;"></div>
<div class="t" style="left:2416px;top:1321px;color:#bbbbbb;font-size:20.9px;line-height:42px;height:42px;">1143 of 4096M</div>
</body></html>
